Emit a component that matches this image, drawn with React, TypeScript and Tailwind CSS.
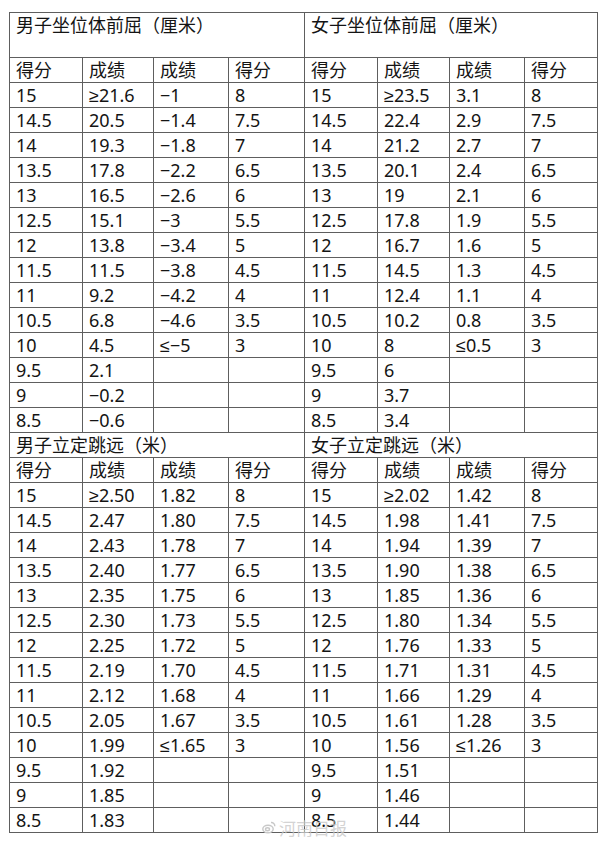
import { Fragment } from "react";

type Row = [string, string, string?, string?];

const sitReachMen: Row[] = [
  ["15", "≥21.6", "−1", "8"],
  ["14.5", "20.5", "−1.4", "7.5"],
  ["14", "19.3", "−1.8", "7"],
  ["13.5", "17.8", "−2.2", "6.5"],
  ["13", "16.5", "−2.6", "6"],
  ["12.5", "15.1", "−3", "5.5"],
  ["12", "13.8", "−3.4", "5"],
  ["11.5", "11.5", "−3.8", "4.5"],
  ["11", "9.2", "−4.2", "4"],
  ["10.5", "6.8", "−4.6", "3.5"],
  ["10", "4.5", "≤−5", "3"],
  ["9.5", "2.1"],
  ["9", "−0.2"],
  ["8.5", "−0.6"],
];

const sitReachWomen: Row[] = [
  ["15", "≥23.5", "3.1", "8"],
  ["14.5", "22.4", "2.9", "7.5"],
  ["14", "21.2", "2.7", "7"],
  ["13.5", "20.1", "2.4", "6.5"],
  ["13", "19", "2.1", "6"],
  ["12.5", "17.8", "1.9", "5.5"],
  ["12", "16.7", "1.6", "5"],
  ["11.5", "14.5", "1.3", "4.5"],
  ["11", "12.4", "1.1", "4"],
  ["10.5", "10.2", "0.8", "3.5"],
  ["10", "8", "≤0.5", "3"],
  ["9.5", "6"],
  ["9", "3.7"],
  ["8.5", "3.4"],
];

const jumpMen: Row[] = [
  ["15", "≥2.50", "1.82", "8"],
  ["14.5", "2.47", "1.80", "7.5"],
  ["14", "2.43", "1.78", "7"],
  ["13.5", "2.40", "1.77", "6.5"],
  ["13", "2.35", "1.75", "6"],
  ["12.5", "2.30", "1.73", "5.5"],
  ["12", "2.25", "1.72", "5"],
  ["11.5", "2.19", "1.70", "4.5"],
  ["11", "2.12", "1.68", "4"],
  ["10.5", "2.05", "1.67", "3.5"],
  ["10", "1.99", "≤1.65", "3"],
  ["9.5", "1.92"],
  ["9", "1.85"],
  ["8.5", "1.83"],
];

const jumpWomen: Row[] = [
  ["15", "≥2.02", "1.42", "8"],
  ["14.5", "1.98", "1.41", "7.5"],
  ["14", "1.94", "1.39", "7"],
  ["13.5", "1.90", "1.38", "6.5"],
  ["13", "1.85", "1.36", "6"],
  ["12.5", "1.80", "1.34", "5.5"],
  ["12", "1.76", "1.33", "5"],
  ["11.5", "1.71", "1.31", "4.5"],
  ["11", "1.66", "1.29", "4"],
  ["10.5", "1.61", "1.28", "3.5"],
  ["10", "1.56", "≤1.26", "3"],
  ["9.5", "1.51"],
  ["9", "1.46"],
  ["8.5", "1.44"],
];

const header = ["得分", "成绩", "成绩", "得分"];

function Cell({ text }: { text?: string }) {
  return <div className="bg-white h-6 pl-[6px] leading-6 whitespace-nowrap">{text ?? ""}</div>;
}

function Section({
  titles,
  left,
  right,
  tall,
}: {
  titles: [string, string];
  left: Row[];
  right: Row[];
  tall?: boolean;
}) {
  return (
    <Fragment>
      {titles.map((t) => (
        <div
          key={t}
          className={
            "col-span-4 bg-white pl-[6px] whitespace-nowrap " +
            (tall ? "h-11 leading-6" : "h-6 leading-6")
          }
        >
          {t}
        </div>
      ))}
      {[...header, ...header].map((h, i) => (
        <Cell key={"h" + i} text={h} />
      ))}
      {left.map((row, r) => (
        <Fragment key={r}>
          {[0, 1, 2, 3].map((c) => (
            <Cell key={"l" + c} text={row[c]} />
          ))}
          {[0, 1, 2, 3].map((c) => (
            <Cell key={"r" + c} text={right[r][c]} />
          ))}
        </Fragment>
      ))}
    </Fragment>
  );
}

export default function App() {
  return (
    <div className="w-[600px] h-[841px] bg-white pl-[9px] pt-[12px] relative overflow-hidden">
      <div
        className="grid grid-cols-[72px_70px_74px_75px_72px_71px_74px_72px] gap-px bg-[#5e5e5e] border border-[#5e5e5e] w-[589px] text-[18px] text-[#141414]"
        style={{ fontFamily: '"Noto Sans", "Liberation Sans", "Noto Sans CJK SC", sans-serif' }}
      >
        <Section
          titles={["男子坐位体前屈（厘米）", "女子坐位体前屈（厘米）"]}
          left={sitReachMen}
          right={sitReachWomen}
          tall
        />
        <Section
          titles={["男子立定跳远（米）", "女子立定跳远（米）"]}
          left={jumpMen}
          right={jumpWomen}
        />
      </div>
      {/* weibo watermark */}
      <div
        className="absolute left-[262px] top-[815px] flex items-center gap-[3px] text-[17px] text-[#c8c8c8]/80"
        style={{ fontFamily: '"Noto Sans CJK SC", sans-serif' }}
      >
        <svg width="14" height="13" viewBox="0 0 14 13" fill="none" stroke="#c8c8c8" strokeWidth="1.4">
          <ellipse cx="6" cy="8" rx="5.2" ry="3.8" />
          <ellipse cx="5.5" cy="8.3" rx="2" ry="1.5" />
          <path d="M9 1.5a3.5 3.5 0 0 1 3.8 3.8" />
        </svg>
        <span>河南日报</span>
      </div>
    </div>
  );
}
